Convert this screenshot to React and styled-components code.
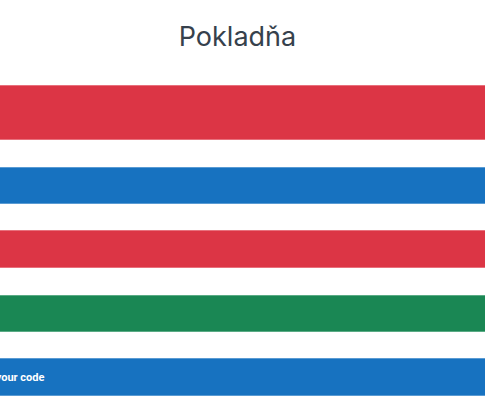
import React from "react";
import styled, { createGlobalStyle } from "styled-components";

const Global = createGlobalStyle`
  html, body { margin: 0; padding: 0; background: #fff; }
  body { font-family: Inter, "Noto Sans", sans-serif; overflow: hidden; }
`;

const Page = styled.div`
  width: 485px;
  height: 400px;
  display: flex;
  flex-direction: column;
  overflow: hidden;
`;

const Header = styled.header`
  height: 85px;
  padding-right: 10px;
  display: flex;
  align-items: flex-start;
  justify-content: center;
`;

const Title = styled.h1`
  margin: 20px 0 0;
  font-size: 27px;
  line-height: 34px;
  font-weight: 400;
  color: #36414c;
`;

const Bars = styled.div`
  display: flex;
  flex-direction: column;
  gap: 26.5px;
`;

const colors = {
  red: { bg: "#dc3545", edge: "#e8707c" },
  blue: { bg: "#1772c0", edge: "#5a9bd3" },
  green: { bg: "#1a8754", edge: "#5aab85" },
};

const Bar = styled.div`
  height: ${(p) => p.$h}px;
  background: ${(p) => colors[p.$tone].bg};
  box-shadow: inset 0 1px 0 ${(p) => colors[p.$tone].edge}, inset 0 -1px 0 ${(p) => colors[p.$tone].edge};
  display: flex;
  align-items: center;
  overflow: hidden;
`;

const Label = styled.span`
  margin-left: -33px;
  color: #fff;
  font-family: Roboto, Inter, sans-serif;
  font-weight: 700;
  font-size: 11px;
  white-space: nowrap;
`;

export default function App() {
  return (
    <Page>
      <Global />
      <Header>
        <Title>Pokladňa</Title>
      </Header>
      <Bars>
        <Bar $tone="red" $h={55} />
        <Bar $tone="blue" $h={37} />
        <Bar $tone="red" $h={38} />
        <Bar $tone="green" $h={37} />
        <Bar $tone="blue" $h={38}>
          <Label>Enter your code</Label>
        </Bar>
      </Bars>
    </Page>
  );
}
